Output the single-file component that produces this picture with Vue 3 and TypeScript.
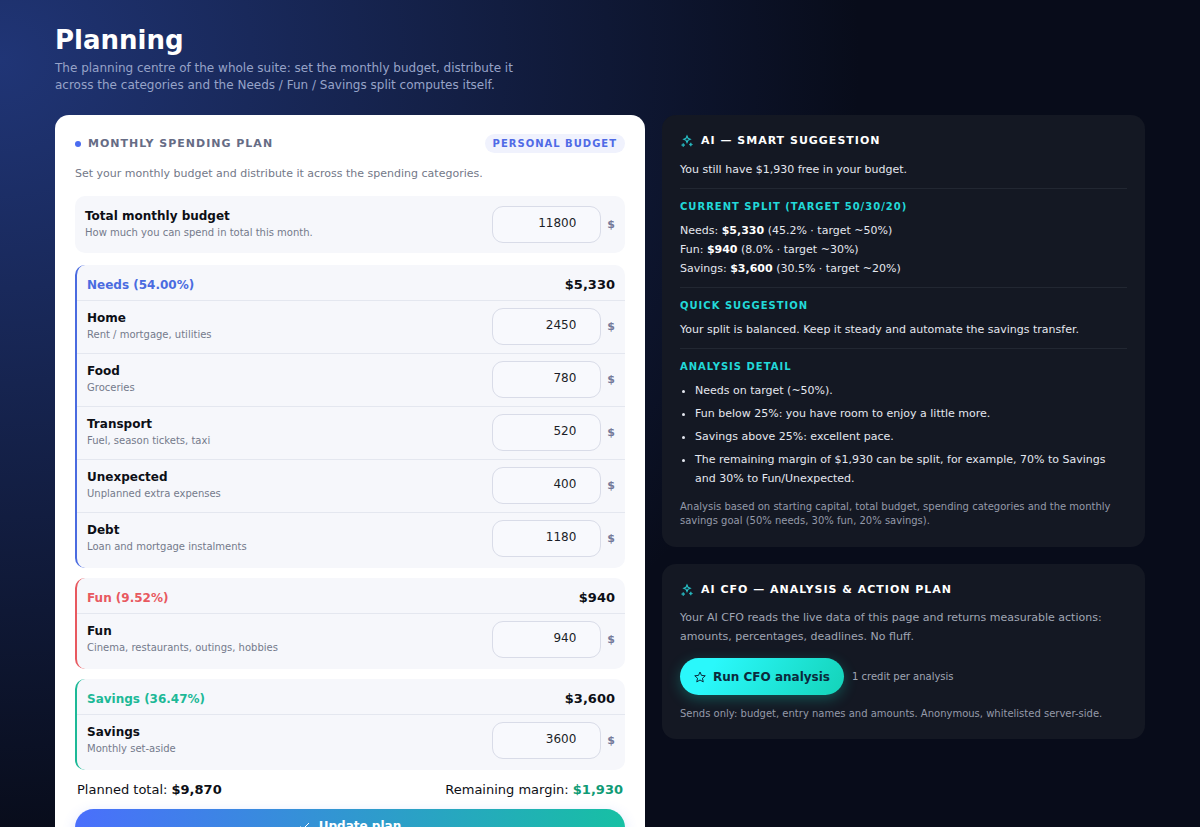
<script setup lang="ts">
import { computed, reactive, ref } from 'vue'

interface Entry {
  id: string
  name: string
  hint: string
  amount: number
}
interface Group {
  id: string
  label: string
  target: number
  entries: Entry[]
}

const total = ref<number>(11800)

const groups = reactive<Group[]>([
  {
    id: 'needs',
    label: 'Needs',
    target: 50,
    entries: [
      { id: 'home', name: 'Home', hint: 'Rent / mortgage, utilities', amount: 2450 },
      { id: 'food', name: 'Food', hint: 'Groceries', amount: 780 },
      { id: 'transport', name: 'Transport', hint: 'Fuel, season tickets, taxi', amount: 520 },
      { id: 'unexpected', name: 'Unexpected', hint: 'Unplanned extra expenses', amount: 400 },
      { id: 'debt', name: 'Debt', hint: 'Loan and mortgage instalments', amount: 1180 },
    ],
  },
  {
    id: 'fun',
    label: 'Fun',
    target: 30,
    entries: [{ id: 'leisure', name: 'Fun', hint: 'Cinema, restaurants, outings, hobbies', amount: 940 }],
  },
  {
    id: 'savings',
    label: 'Savings',
    target: 20,
    entries: [{ id: 'aside', name: 'Savings', hint: 'Monthly set-aside', amount: 3600 }],
  },
])

const sum = (g: Group): number => g.entries.reduce((s, e) => s + Number(e.amount || 0), 0)
const planned = computed(() => groups.reduce((s, g) => s + sum(g), 0))
const margin = computed(() => total.value - planned.value)
const money = (n: number): string => '$' + n.toLocaleString('en-US')
const share = (g: Group): string => ((sum(g) / planned.value) * 100).toFixed(2)
const ofBudget = (g: Group): string => ((sum(g) / total.value) * 100).toFixed(1)
</script>

<template>
  <main class="page">
    <header class="intro">
      <h1>Planning</h1>
      <p>
        The planning centre of the whole suite: set the monthly budget, distribute it across the
        categories and the Needs / Fun / Savings split computes itself.
      </p>
    </header>

    <div class="columns">
      <form class="plan" @submit.prevent>
        <div class="plan-head">
          <h2><span class="dot"></span>Monthly spending plan</h2>
          <span class="pill">Personal budget</span>
        </div>
        <p class="lead">Set your monthly budget and distribute it across the spending categories.</p>

        <div class="total-box">
          <label for="total">
            <b>Total monthly budget</b>
            <small>How much you can spend in total this month.</small>
          </label>
          <span class="field"><input id="total" v-model.number="total" type="number" /><i>$</i></span>
        </div>

        <section v-for="g in groups" :key="g.id" class="group" :class="g.id">
          <div class="group-head">
            <h3>{{ g.label }} ({{ share(g) }}%)</h3>
            <strong>{{ money(sum(g)) }}</strong>
          </div>
          <div v-for="e in g.entries" :key="e.id" class="entry">
            <label :for="e.id">
              <b>{{ e.name }}</b>
              <small>{{ e.hint }}</small>
            </label>
            <span class="field"><input :id="e.id" v-model.number="e.amount" type="number" /><i>$</i></span>
          </div>
        </section>

        <div class="totals">
          <span>Planned total: <b>{{ money(planned) }}</b></span>
          <span>Remaining margin: <b class="good">{{ money(margin) }}</b></span>
        </div>
        <button class="update" type="submit">
          <svg viewBox="0 0 24 24" aria-hidden="true"><path d="M3 13l5 5L20 6" /></svg>
          Update plan
        </button>
      </form>

      <aside class="side">
        <section class="panel">
          <h2>
            <svg class="spark" viewBox="0 0 24 24" aria-hidden="true">
              <path d="M12 3.500l1.700 3.800 3.800 1.700-3.800 1.700-1.700 3.800-1.700-3.800-3.800-1.700 3.800-1.700z" />
              <path class="solid" d="M5.500 16l.9 2.100 2.100.9-2.100.9-.9 2.100-.9-2.100-2.100-.9 2.100-.9zM18.500 15l.9 2.100 2.100.9-2.100.9-.9 2.100-.9-2.100-2.100-.9 2.100-.9z" />
            </svg>
            AI — Smart suggestion
          </h2>
          <div class="block">
            <p>You still have {{ money(margin) }} free in your budget.</p>
          </div>
          <div class="block">
            <h3>Current split (target 50/30/20)</h3>
            <p v-for="g in groups" :key="g.id">
              {{ g.label }}: <b>{{ money(sum(g)) }}</b> ({{ ofBudget(g) }}% · target ~{{ g.target }}%)
            </p>
          </div>
          <div class="block">
            <h3>Quick suggestion</h3>
            <p>Your split is balanced. Keep it steady and automate the savings transfer.</p>
          </div>
          <div class="block">
            <h3>Analysis detail</h3>
            <ul>
              <li>Needs on target (~50%).</li>
              <li>Fun below 25%: you have room to enjoy a little more.</li>
              <li>Savings above 25%: excellent pace.</li>
              <li>
                The remaining margin of {{ money(margin) }} can be split, for example, 70% to Savings
                and 30% to Fun/Unexpected.
              </li>
            </ul>
          </div>
          <p class="note">
            Analysis based on starting capital, total budget, spending categories and the monthly
            savings goal (50% needs, 30% fun, 20% savings).
          </p>
        </section>

        <section class="panel">
          <h2>
            <svg class="spark" viewBox="0 0 24 24" aria-hidden="true">
              <path d="M12 3.500l1.700 3.800 3.800 1.700-3.800 1.700-1.700 3.800-1.700-3.800-3.800-1.700 3.800-1.700z" />
              <path class="solid" d="M5.500 16l.9 2.100 2.100.9-2.100.9-.9 2.100-.9-2.100-2.100-.9 2.100-.9zM18.500 15l.9 2.100 2.100.9-2.100.9-.9 2.100-.9-2.100-2.100-.9 2.100-.9z" />
            </svg>
            AI CFO — Analysis &amp; action plan
          </h2>
          <p class="about">
            Your AI CFO reads the live data of this page and returns measurable actions: amounts,
            percentages, deadlines. No fluff.
          </p>
          <div class="run-row">
            <button class="run" type="button">
              <svg viewBox="0 0 24 24" aria-hidden="true">
                <path d="M12 2l3 6.800 7.500.7-5.600 5 1.600 7.300L12 18l-6.500 3.800 1.600-7.300-5.600-5L9 8.800z" />
              </svg>
              Run CFO analysis
            </button>
            <span>1 credit per analysis</span>
          </div>
          <p class="note">Sends only: budget, entry names and amounts. Anonymous, whitelisted server-side.</p>
        </section>
      </aside>
    </div>
  </main>
</template>

<style>
body {
  margin: 0;
  background: #080c1a;
}
html {
  scrollbar-width: none;
}
</style>

<style scoped>
* {
  box-sizing: border-box;
}
h1,
h2,
h3,
p,
ul {
  margin: 0;
}
.page {
  min-height: 100vh;
  padding: 24px 55px 32px;
  overflow: hidden;
  font-family: 'DejaVu Sans', sans-serif;
  font-size: 12px;
  color: #0d0f16;
  background: radial-gradient(860px 780px at 0 60px, #203576, rgba(8, 12, 26, 0)), #080c1a;
}
.intro {
  margin-bottom: 21px;
}
.intro h1 {
  font-size: 26px;
  line-height: 32px;
  color: #fff;
}
.intro p {
  max-width: 460px;
  margin-top: 4px;
  font-size: 12px;
  line-height: 17px;
  color: #97a3c8;
}
.columns {
  display: grid;
  grid-template-columns: 590fr 483fr;
  gap: 17px;
  align-items: start;
}
.plan {
  padding: 19px 20px 24px;
  border-radius: 14px;
  background: #fff;
}
.plan-head {
  display: flex;
  justify-content: space-between;
  align-items: center;
}
.plan-head h2 {
  display: flex;
  align-items: center;
  gap: 7px;
  font-size: 11px;
  letter-spacing: 1px;
  text-transform: uppercase;
  color: #666c85;
}
.dot {
  width: 6px;
  height: 6px;
  border-radius: 50%;
  background: #4a6cf0;
}
.pill {
  padding: 0 8px;
  border-radius: 10px;
  font-size: 10px;
  line-height: 19px;
  font-weight: 700;
  letter-spacing: 1px;
  text-transform: uppercase;
  color: #4f6ae6;
  background: #f0f2fd;
}
.lead {
  margin: 13px 0 14px;
  font-size: 11px;
  line-height: 16px;
  color: #737888;
}
.total-box,
.entry {
  display: flex;
  justify-content: space-between;
  align-items: center;
}
.total-box {
  padding: 10px;
  margin-bottom: 12px;
  border-radius: 10px;
  background: #f6f7fb;
}
label b,
label small {
  display: block;
}
label b {
  font-size: 12px;
  line-height: 17px;
}
label small {
  font-size: 10px;
  line-height: 16px;
  color: #747a8b;
}
.field {
  display: flex;
  align-items: center;
  gap: 6px;
}
.field input {
  width: 109px;
  height: 37px;
  padding: 0 24px 3px 10px;
  border: 1px solid #d9dce8;
  border-radius: 11px;
  font-family: inherit;
  font-size: 12px;
  text-align: right;
  color: #1b1e28;
  background: #f8f9fd;
  appearance: textfield;
}
.field input::-webkit-inner-spin-button {
  display: none;
}
.field i {
  font-size: 11px;
  line-height: 16px;
  font-style: normal;
  font-weight: 700;
  color: #747a99;
}
.group {
  margin-bottom: 10px;
  padding-bottom: 3px;
  border-left: 2px solid;
  border-radius: 10px;
  background: #f6f7fb;
}
.group.needs {
  border-color: #4a6be0;
}
.group.fun {
  border-color: #e8595f;
}
.group.savings {
  border-color: #1db997;
}
.group-head {
  display: flex;
  justify-content: space-between;
  align-items: center;
  height: 35px;
  padding: 4px 10px 0;
}
.group-head h3 {
  font-size: 12px;
}
.needs h3 {
  color: #4a6be0;
}
.fun h3 {
  color: #e8595f;
}
.savings h3 {
  color: #1db997;
}
.group-head strong {
  font-size: 13px;
}
.entry {
  padding: 7px 10px 8px;
  border-top: 1px solid #e4e7ef;
}
.totals {
  display: flex;
  justify-content: space-between;
  padding: 0 2px;
  font-size: 13px;
  line-height: 20px;
}
.good {
  color: #109b75;
}
button {
  display: flex;
  justify-content: center;
  align-items: center;
  border: 0;
  font-family: inherit;
  font-size: 12px;
  font-weight: 700;
}
button svg {
  width: 12px;
  height: 12px;
  fill: none;
  stroke: currentColor;
  stroke-width: 2;
}
.update {
  width: 100%;
  height: 37px;
  margin-top: 9px;
  padding: 0 0 4px;
  gap: 8px;
  border-radius: 19px;
  color: #fff;
  background: linear-gradient(90deg, #4a6ffc, #17c0a4);
  box-shadow: 0 4px 14px rgba(74, 111, 252, 0.2);
}
.side {
  display: flex;
  flex-direction: column;
  gap: 17px;
}
.panel {
  padding: 17px 18px 18px;
  border-radius: 14px;
  color: #e4e7ef;
  background: #141823;
}
.panel h2 {
  display: flex;
  align-items: center;
  gap: 7px;
  margin-bottom: 1px;
  font-size: 11px;
  line-height: 18px;
  letter-spacing: 1px;
  text-transform: uppercase;
  color: #fff;
}
.spark {
  width: 14px;
  height: 14px;
  fill: none;
  stroke: #27bfc6;
  stroke-width: 2;
}
.spark .solid {
  fill: #27bfc6;
  stroke-width: 1;
}
.block {
  padding: 9px 0;
  font-size: 11px;
  line-height: 19px;
}
.block + .block {
  border-top: 1px solid #222732;
}
.block h3 {
  margin-bottom: 5px;
  font-size: 10px;
  line-height: 18px;
  letter-spacing: 1px;
  text-transform: uppercase;
  color: #22d9d9;
}
.block b {
  color: #fff;
}
.block ul {
  padding-left: 15px;
}
.block li + li {
  margin-top: 4px;
}
.note {
  font-size: 10px;
  line-height: 14px;
  color: #949aa9;
}
.block + .note {
  margin: 3px 0 1px;
}
.about {
  margin: 9px 0 12px;
  font-size: 11px;
  line-height: 19px;
  color: #a0a6b4;
}
.run-row {
  display: flex;
  align-items: center;
  gap: 8px;
  margin-bottom: 12px;
  font-size: 10px;
  color: #a0a6b4;
}
.run {
  height: 37px;
  padding: 0 14px;
  gap: 7px;
  border-radius: 19px;
  color: #0b2a3c;
  background: linear-gradient(120deg, #2af8fb 20%, #14d3b8);
  box-shadow: 0 4px 14px rgba(20, 211, 190, 0.3);
}
</style>
